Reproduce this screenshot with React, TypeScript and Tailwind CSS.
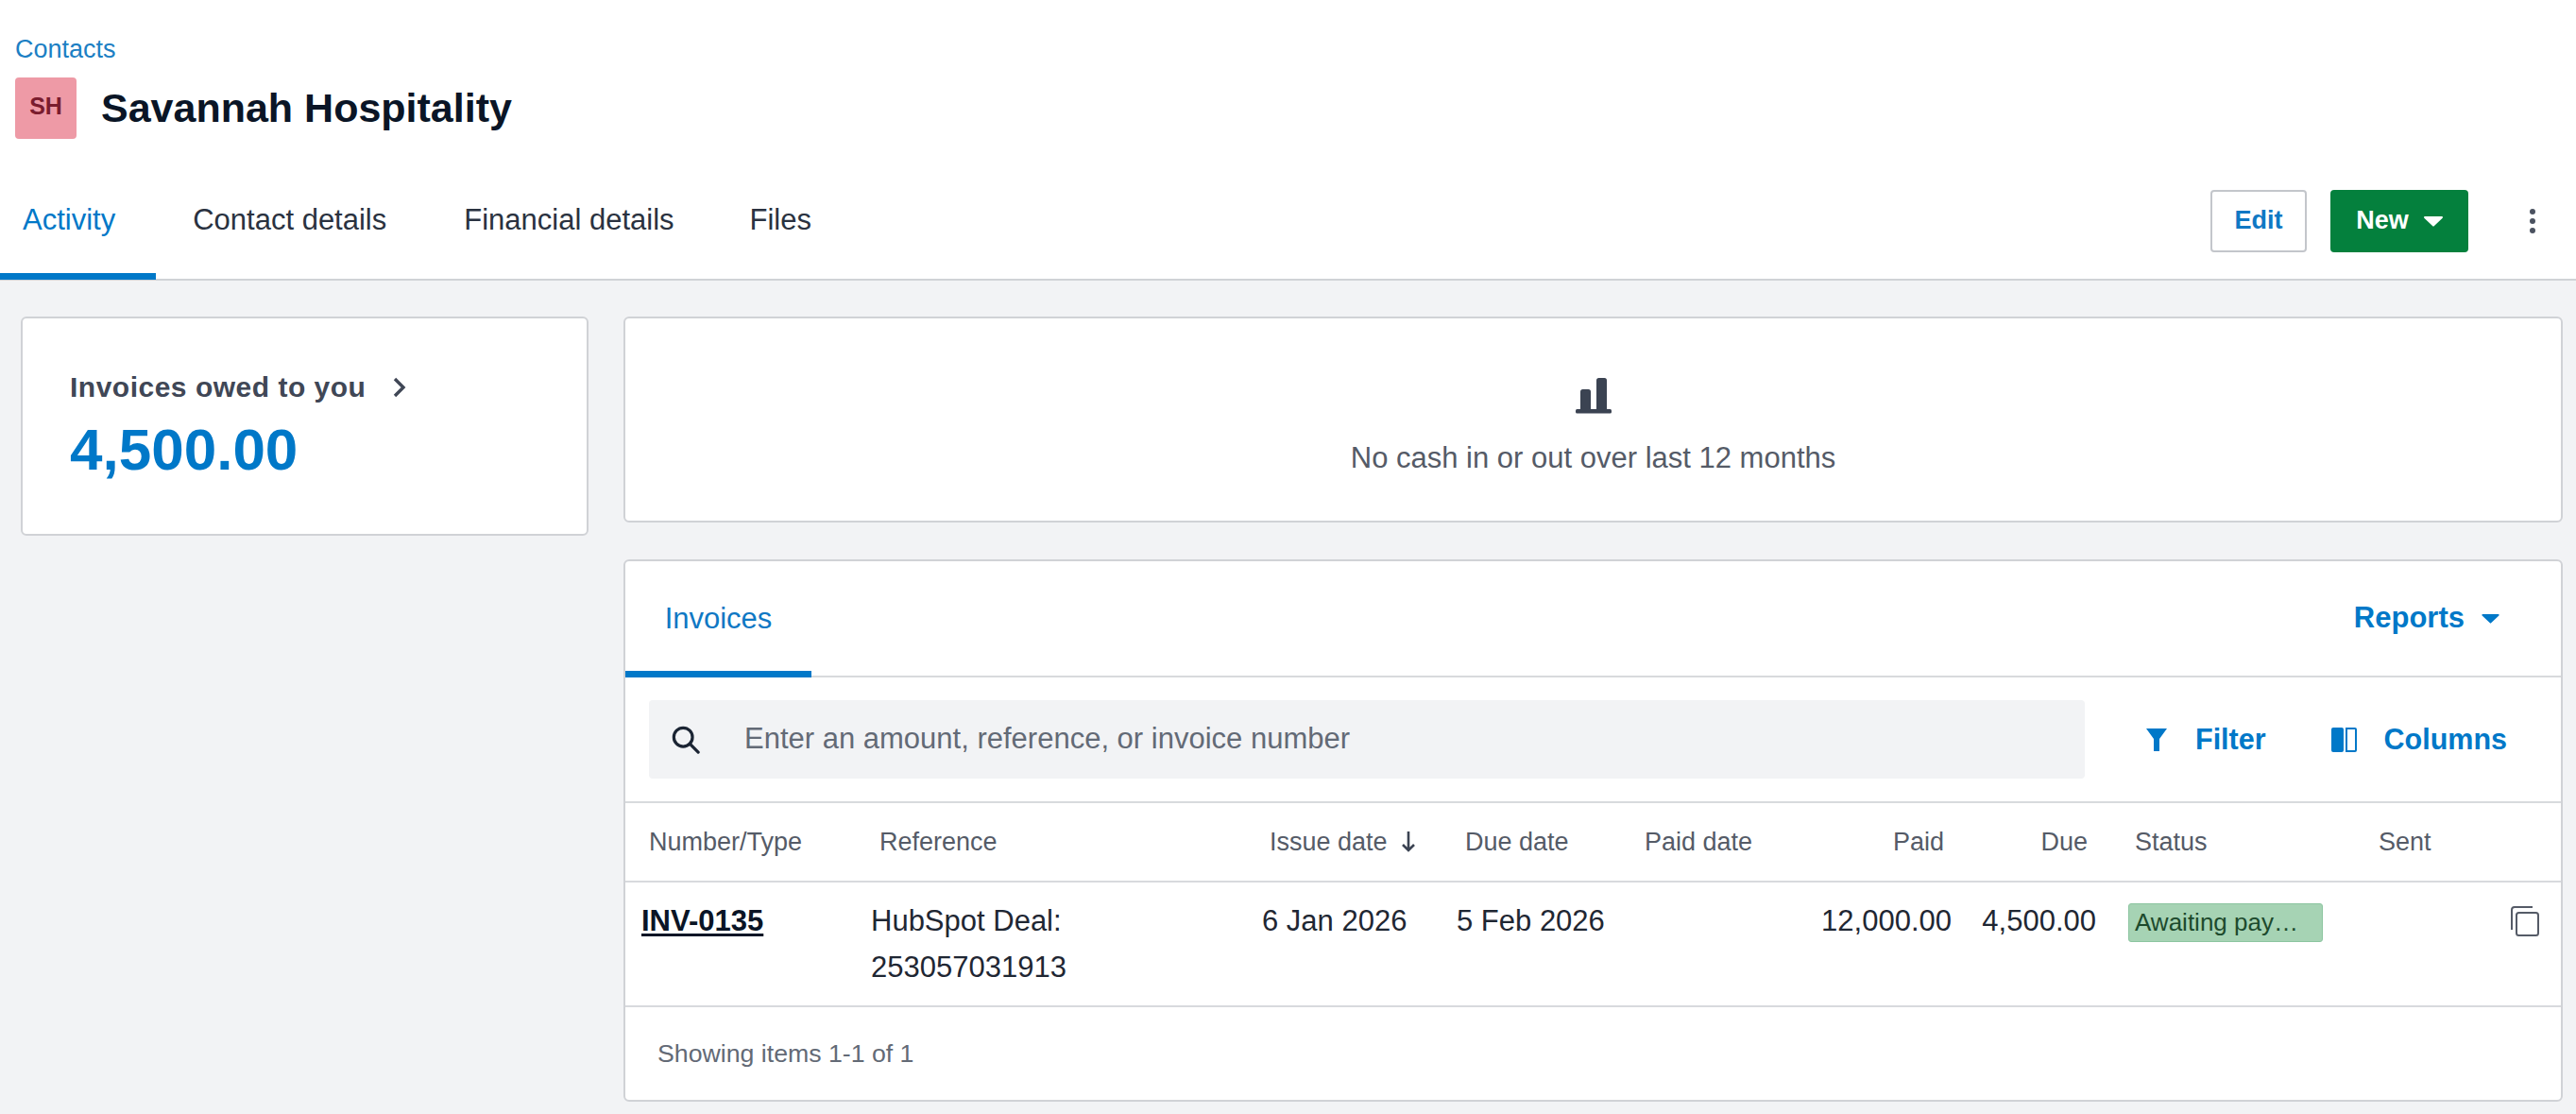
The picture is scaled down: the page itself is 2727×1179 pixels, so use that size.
const rowGrid = "grid grid-cols-[252px_414px_206px_191px_196px_152px_154px_273px_140px_1fr]";

const TopTab = ({ label, active = false, className = "" }: { label: string; active?: boolean; className?: string }) => (
  <div
    className={`flex h-full items-center border-b-[7px] pt-[7px] text-[31px] ${
      active ? "border-[#0078c8] text-[#0078c8]" : "border-transparent text-[#2a3240]"
    } ${className}`}
  >
    {label}
  </div>
);

const Caret = ({ className = "" }: { className?: string }) => (
  <svg viewBox="0 0 20 12" className={className} fill="currentColor">
    <path d="M1 1h18a1 1 0 0 1 .7 1.7l-9 8.6a1 1 0 0 1-1.4 0l-9-8.6A1 1 0 0 1 1 1z" />
  </svg>
);

const App = () => {
  return (
    <div className="flex min-h-[1179px] flex-col bg-[#f2f3f5] font-['Liberation_Sans',Arial,sans-serif]">
      {/* Header */}
      <div className="h-[297px] border-b-2 border-[#d0d2d6] bg-white">
        <div className="pl-4 pt-[36px] text-[27px] leading-[32px] text-[#1c7fc4]">Contacts</div>
        <div className="mt-[14px] flex items-center pl-4">
          <div className="flex h-[65px] w-[65px] items-center justify-center rounded-[4px] bg-[#ee9aa6] pb-1 text-[25px] font-bold text-[#7a1c2e]">
            SH
          </div>
          <h1 className="ml-[26px] text-[43px] font-bold leading-[65px] text-[#0a1526]">Savannah Hospitality</h1>
        </div>
        <div className="mt-[24px] flex h-[125px] items-center pr-[42px]">
          <TopTab label="Activity" active className="pl-6 pr-[43px]" />
          <TopTab label="Contact details" className="ml-[39px]" />
          <TopTab label="Financial details" className="ml-[82px]" />
          <TopTab label="Files" className="ml-[80px]" />
          <div className="ml-auto flex items-center">
            <button className="flex h-[66px] w-[102px] items-center justify-center rounded-[4px] border-2 border-[#c3c6cb] bg-white text-[27px] font-bold text-[#0f78c4]">
              Edit
            </button>
            <button className="ml-[25px] flex h-[66px] w-[146px] items-center justify-center gap-[16px] rounded-[4px] bg-[#04803d] text-[27px] font-bold text-white">
              New
              <Caret className="h-[12px] w-[20px]" />
            </button>
            <svg viewBox="0 0 8 28" className="ml-[64px] h-[28px] w-[8px]" fill="#4b5260">
              <circle cx="4" cy="4" r="3" />
              <circle cx="4" cy="14" r="3" />
              <circle cx="4" cy="24" r="3" />
            </svg>
          </div>
        </div>
      </div>

      <div className="flex items-start gap-[37px] pl-[22px] pr-[14px] pt-[38px]">
        {/* Balance card */}
        <div className="h-[232px] w-[601px] shrink-0 rounded-[6px] border-2 border-[#d0d2d6] bg-white pl-[50px] pt-[51px]">
          <div className="flex items-center text-[30px] font-bold leading-[44px] tracking-[0.5px] text-[#404756]">
            Invoices owed to you
            <svg viewBox="0 0 16 22" className="ml-[28px] h-[22px] w-[16px]" fill="none" stroke="currentColor" strokeWidth="3.4">
              <path d="M3 2l9 9-9 9" />
            </svg>
          </div>
          <div className="mt-[8px] text-[62px] font-bold leading-[72px] text-[#0078c8]">4,500.00</div>
        </div>

        <div className="flex flex-1 flex-col gap-[39px]">
          {/* Cash summary */}
          <div className="flex h-[218px] flex-col items-center rounded-[6px] border-2 border-[#d0d2d6] bg-white pt-[63px]">
            <svg viewBox="0 0 38 38" className="h-[38px] w-[38px]" fill="#3b4352">
              <rect x="5" y="12" width="11" height="23" rx="2.5" />
              <rect x="22" y="0" width="11" height="35" rx="2.5" />
              <rect x="0" y="33" width="38" height="4.5" rx="1.5" />
            </svg>
            <div className="mt-[27px] text-[31px] leading-[40px] text-[#555b67]">No cash in or out over last 12 months</div>
          </div>

          {/* Invoices table */}
          <div className="h-[574px] rounded-[6px] border-2 border-[#d0d2d6] bg-white">
            <div className="flex h-[123px] items-center border-b-2 border-[#d8dadd] pr-[65px]">
              <div className="-mb-[2px] flex h-[123px] w-[197px] items-center justify-center border-b-[7px] border-[#0078c8] pt-[7px] text-[31px] text-[#0f78c4]">
                Invoices
              </div>
              <div className="ml-auto flex items-center gap-[18px] text-[31px] font-bold text-[#0078c8]">
                Reports
                <Caret className="h-[11px] w-[19px]" />
              </div>
            </div>

            <div className="flex h-[133px] items-center border-b-2 border-[#d8dadd] pl-[25px]">
              <div className="flex h-[83px] w-[1520px] items-center rounded-[4px] bg-[#f2f3f5] pl-[24px]">
                <svg viewBox="0 0 32 32" className="h-[30px] w-[30px]" fill="none" stroke="#1b2433" strokeWidth="3.4">
                  <circle cx="13" cy="13" r="10.5" />
                  <path d="M20.5 20.5L30 30" strokeLinecap="round" />
                </svg>
                <span className="ml-[47px] text-[31px] text-[#636a76]">Enter an amount, reference, or invoice number</span>
              </div>
              <div className="ml-[65px] flex items-center text-[30.5px] font-bold text-[#0078c8]">
                <svg viewBox="0 0 22 24" className="h-[24px] w-[22px]" fill="currentColor">
                  <path d="M0 0h22L14 11v13H8V11z" />
                </svg>
                <span className="ml-[30px]">Filter</span>
                <svg viewBox="0 0 27 26" className="ml-[69px] h-[26px] w-[27px]">
                  <rect x="0" y="0" width="13" height="26" rx="2" fill="currentColor" />
                  <path d="M16 1h9a1 1 0 0 1 1 1v22a1 1 0 0 1-1 1h-9z" fill="none" stroke="currentColor" strokeWidth="2" />
                </svg>
                <span className="ml-[29px]">Columns</span>
              </div>
            </div>

            <div className={`${rowGrid} h-[84px] items-center border-b-2 border-[#d8dadd] text-[27px] text-[#555b67]`}>
              <div className="pl-[25px]">Number/Type</div>
              <div className="pl-[17px]">Reference</div>
              <div className="flex items-center pl-[16px]">
                Issue date
                <svg viewBox="0 0 16 22" className="ml-[14px] h-[22px] w-[16px]" fill="none" stroke="#3b4352" strokeWidth="2.6">
                  <path d="M8 0v20M2 14l6 6 6-6" />
                </svg>
              </div>
              <div className="pl-[17px]">Due date</div>
              <div className="pl-[16px]">Paid date</div>
              <div className="pr-[15px] text-right">Paid</div>
              <div className="pr-[17px] text-right">Due</div>
              <div className="pl-[33px]">Status</div>
              <div className="pl-[18px]">Sent</div>
              <div />
            </div>

            <div className={`${rowGrid} h-[132px] items-start border-b-2 border-[#d8dadd] pt-[16px] text-[31px] leading-[49px] text-[#1f2733]`}>
              <div className="pl-[17px] font-bold text-[#0a1526] underline underline-offset-[3px]">INV-0135</div>
              <div className="pl-[8px]">
                HubSpot Deal:
                <br />
                253057031913
              </div>
              <div className="pl-[8px]">6 Jan 2026</div>
              <div className="pl-[8px]">5 Feb 2026</div>
              <div />
              <div className="pr-[7px] text-right">12,000.00</div>
              <div className="pr-[8px] text-right">4,500.00</div>
              <div className="pl-[26px] pt-[6px]">
                <div className="flex h-[41px] w-[206px] items-center rounded-[3px] border border-[#8cc5a0] bg-[#a6d3b4] pl-[6px] text-[26px] text-[#1d4a2d]">
                  Awaiting pay…
                </div>
              </div>
              <div />
              <div className="pl-[16px] pt-[9px]">
                <svg viewBox="0 0 32 32" className="h-[32px] w-[32px]" fill="none" stroke="#555b67" strokeWidth="2">
                  <path d="M3 25V4a3 3 0 0 1 3-3h19" />
                  <rect x="8" y="7" width="23" height="24" rx="2.5" />
                </svg>
              </div>
            </div>

            <div className="flex h-[98px] items-center pl-[34px] text-[26.7px] text-[#636a76]">Showing items 1-1 of 1</div>
          </div>
        </div>
      </div>
    </div>
  );
};

export default App;
